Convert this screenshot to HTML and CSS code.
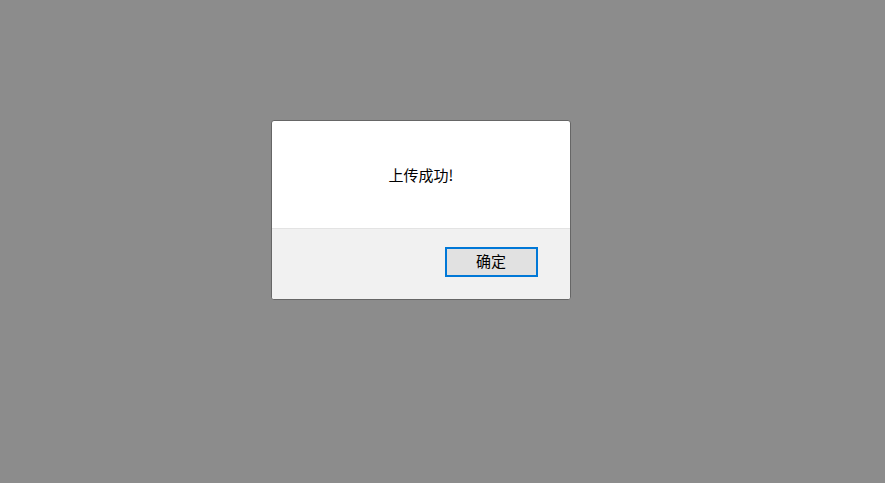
FILE: index.html
```html
<!DOCTYPE html>
<html lang="zh-CN">
<head>
<meta charset="utf-8">
<title>上传</title>
<link rel="stylesheet" href="styles.css">
</head>
<body>
<div class="dialog" role="alertdialog">
  <p class="message">上传成功!</p>
  <div class="actions"><button class="confirm" type="button">确定</button></div>
</div>
</body>
</html>
```
FILE: styles.css
```css
* { box-sizing: border-box; }
body {
  margin: 0;
  height: 100vh;
  overflow: hidden;
  padding: 120px 0 0 271px;
  background: #8c8c8c;
  color: #000;
  font: 15px/20px "Noto Sans CJK SC", sans-serif;
}
.dialog {
  width: 300px;
  height: 180px;
  display: flex;
  flex-direction: column;
  background: #fff;
  border: 1px solid #666;
  border-radius: 3px;
  overflow: hidden;
}
.message {
  flex: 1;
  display: flex;
  align-items: center;
  justify-content: center;
  margin: 0;
  padding-top: 1px;
}
.actions {
  height: 71px;
  display: flex;
  justify-content: flex-end;
  align-items: flex-start;
  padding: 18px 32px 0 0;
  background: #f1f1f1;
  border-top: 1px solid #e3e3e3;
}
.confirm {
  width: 93px;
  height: 30px;
  padding: 0 1px 2px 0;
  font: inherit;
  color: #000;
  background: #e1e1e1;
  border: 2px solid #0078d7;
}
```
